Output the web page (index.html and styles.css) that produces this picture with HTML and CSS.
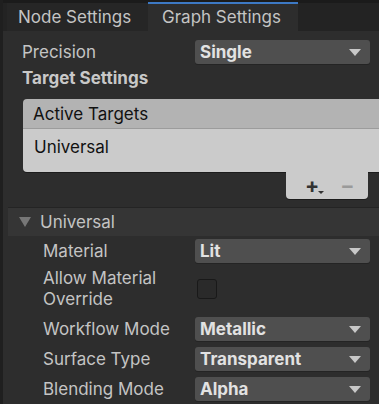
FILE: index.html
```html
<!DOCTYPE html>
<html lang="en">
<head>
  <meta charset="UTF-8">
  <title>Graph Inspector</title>
  <link rel="stylesheet" href="styles.css">
</head>
<body>
  <div class="inspector">
    <div class="tabs">
      <div class="tab">Node Settings</div>
      <div class="tab active">Graph Settings</div>
      <div class="tab-fill"></div>
    </div>

    <div class="content">
      <div class="row">
        <span class="label">Precision</span>
        <div class="dropdown">Single<span class="caret"></span></div>
      </div>
      <div class="heading">Target Settings</div>

      <div class="list">
        <div class="list-head">Active Targets</div>
        <div class="list-body">Universal</div>
      </div>
      <div class="list-footer">
        <div class="footer-btns">
          <span class="plus">+<span class="mini-caret"></span></span>
          <span class="minus">−</span>
        </div>
      </div>
    </div>

    <div class="section">
      <div class="section-head"><span class="fold"></span>Universal</div>
      <div class="section-body">
        <div class="row">
          <span class="label">Material</span>
          <div class="dropdown">Lit<span class="caret"></span></div>
        </div>
        <div class="row tall">
          <span class="label">Allow Material<br>Override</span>
          <div class="check"></div>
        </div>
        <div class="row">
          <span class="label">Workflow Mode</span>
          <div class="dropdown">Metallic<span class="caret"></span></div>
        </div>
        <div class="row">
          <span class="label">Surface Type</span>
          <div class="dropdown">Transparent<span class="caret"></span></div>
        </div>
        <div class="row">
          <span class="label">Blending Mode</span>
          <div class="dropdown">Alpha<span class="caret"></span></div>
        </div>
      </div>
    </div>
  </div>
</body>
</html>
```

FILE: styles.css
```css
body {
  margin: 0;
  background: #2d2d2d;
  font-family: Inter, "Noto Sans", sans-serif;
  color: #c8c8c8;
  overflow: hidden;
}

.inspector {
  width: 379px;
  height: 404px;
  border-left: 3px solid #1f1f1f;
  box-sizing: border-box;
  background: #2d2d2d;
}

.tabs {
  display: flex;
  height: 28px;
  border-top: 3px solid #1b1b1b;
  background: #232323;
  padding-left: 4px;
}

.tab {
  width: 141px;
  background: #262626;
  font-size: 17px;
  line-height: 28px;
  padding-left: 11px;
  box-sizing: border-box;
  color: #c4c4c4;
}

.tab.active {
  width: 150px;
  background: #2d2d2d;
  border-top: 2px solid #3d79c4;
  line-height: 26px;
  padding-left: 14px;
  margin-top: -1px;
  height: 29px;
}

.tab-fill {
  flex: 1;
}

.content {
  padding: 6px 0 0 19px;
}

.row {
  display: flex;
  align-items: center;
  height: 30px;
}

.row.tall {
  height: 48px;
  align-items: flex-start;
}

.row.tall .label {
  padding-top: 2px;
}

.label {
  width: 173px;
  font-size: 17px;
  line-height: 21px;
  color: #c4c4c4;
}

.dropdown {
  position: relative;
  width: 175px;
  height: 24px;
  background: #4f4f4f;
  border-radius: 3px;
  box-sizing: border-box;
  padding-left: 5px;
  font-size: 17px;
  font-weight: 700;
  line-height: 25px;
  color: #e2e2e2;
  box-shadow: 0 1px 0 #242424;
}

.caret {
  position: absolute;
  right: 9px;
  top: 9px;
  border-left: 6px solid transparent;
  border-right: 6px solid transparent;
  border-top: 7px solid #c8c8c8;
}

.heading {
  font-size: 17px;
  font-weight: 700;
  color: #c8c8c8;
  line-height: 20px;
  margin-top: 1px;
}

.list {
  margin-top: 11px;
  margin-left: 1px;
  border-radius: 4px 0 0 4px;
  overflow: hidden;
  box-shadow: 0 1px 0 #1c1c1c;
}

.list-head {
  height: 29px;
  background: #b3b3b3;
  border-bottom: 1px solid #9c9c9c;
  color: #111;
  font-size: 17px;
  line-height: 30px;
  padding-left: 10px;
}

.list-body {
  height: 43px;
  background: #cbcbcb;
  color: #111;
  font-size: 17px;
  line-height: 36px;
  padding-left: 11px;
}

.list-footer {
  display: flex;
  justify-content: flex-end;
  padding-right: 11px;
}

.footer-btns {
  width: 82px;
  height: 27px;
  background: #cbcbcb;
  border-radius: 0 0 4px 4px;
  box-shadow: 0 1px 0 #1c1c1c;
  display: flex;
  align-items: center;
  gap: 21px;
  padding-left: 19px;
  box-sizing: border-box;
  font-size: 21px;
  font-weight: 700;
}

.plus {
  position: relative;
  color: #333;
}

.mini-caret {
  position: absolute;
  right: -5px;
  bottom: 4px;
  border-left: 3px solid transparent;
  border-right: 3px solid transparent;
  border-top: 3px solid #333;
}

.minus {
  color: #9a9a9a;
}

.section {
  margin-top: 8px;
}

.section-head {
  display: flex;
  align-items: center;
  height: 28px;
  margin-left: 5px;
  background: #353535;
  border-top: 1px solid #242424;
  font-size: 17px;
  color: #c4c4c4;
}

.fold {
  width: 0;
  height: 0;
  margin: 0 9px 0 11px;
  border-left: 6px solid transparent;
  border-right: 6px solid transparent;
  border-top: 10px solid #777;
}

.section-body {
  padding: 0 0 0 40px;
}

.section-body .label {
  width: 152px;
}

.check {
  width: 18px;
  height: 18px;
  margin-top: 13px;
  margin-left: 2px;
  background: #2a2a2a;
  border: 1px solid #191919;
  border-radius: 3px;
}
```
